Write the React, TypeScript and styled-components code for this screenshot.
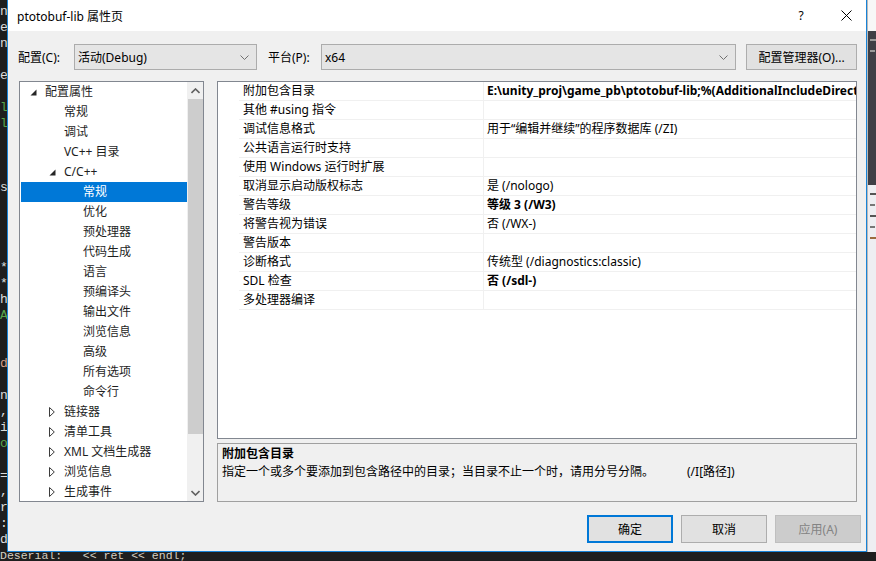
import React from "react";
import styled, { createGlobalStyle } from "styled-components";

const UI_FONT = `"Noto Sans", "Noto Sans CJK SC", sans-serif`;
const MONO = `"Liberation Mono", "DejaVu Sans Mono", monospace`;

const GlobalStyle = createGlobalStyle`
  html, body { margin: 0; padding: 0; background: #1e1e1e; overflow: hidden; }
  body { font-family: ${UI_FONT}; font-size: 12px; }
  * { box-sizing: border-box; }
`;

const Desktop = styled.div`
  width: 876px;
  height: 561px;
  display: flex;
  flex-direction: column;
  overflow: hidden;
`;

const TopRow = styled.div`
  height: 552px;
  display: flex;
`;

const CodeStrip = styled.div`
  width: 7px;
  flex: none;
  background: #1e1e1e;
  overflow: hidden;
  padding-top: 4px;
  font-family: ${MONO};
  font-size: 13px;
  line-height: 16px;
`;

const CodeLine = styled.div<{ $color: string }>`
  height: 16px;
  color: ${(p) => p.$color};
  white-space: pre;
`;

const RightStrip = styled.div`
  flex: 1;
  display: flex;
  flex-direction: column;
  border-left: 1px solid #b9b9b9;
`;

const StripPart = styled.div<{ $h?: number; $bg: string }>`
  height: ${(p) => (p.$h ? `${p.$h}px` : "auto")};
  flex: ${(p) => (p.$h ? "none" : "1")};
  background: ${(p) => p.$bg};
  display: flex;
  flex-direction: column;
  gap: 9px;
  padding: 8px 0 0 2px;
`;

const StripMark = styled.div<{ $w: number; $c: string }>`
  width: ${(p) => p.$w}px;
  height: 2px;
  background: ${(p) => p.$c};
`;

const BottomRow = styled.div`
  flex: 1;
  background: #1e1e1e;
  overflow: hidden;
  font-family: ${MONO};
  font-size: 11.5px;
  line-height: 16px;
  color: #d4cfc3;
  white-space: pre;
`;

const BottomCode = styled.div`
  margin-top: -4px;
`;

const Dialog = styled.div`
  width: 860px;
  flex: none;
  display: flex;
  flex-direction: column;
  background: #f0f0f0;
  border: 1px solid #1883d7;
  border-top: none;
`;

const TitleBar = styled.div`
  height: 31px;
  flex: none;
  background: #ffffff;
  display: flex;
  align-items: center;
  padding-left: 9px;
`;

const TitleText = styled.div`
  flex: 1;
  color: #000;
  font-size: 12px;
`;

const TitleButtons = styled.div`
  display: flex;
  gap: 5px;
`;

const TitleButton = styled.div`
  width: 40px;
  height: 31px;
  display: flex;
  align-items: center;
  justify-content: center;
  color: #000;
  font-size: 12px;
`;

const Body = styled.div`
  flex: 1;
  min-width: 0;
  display: flex;
  flex-direction: column;
  padding: 13px 9px 8px 10px;
`;

const Toolbar = styled.div`
  height: 26px;
  display: flex;
  align-items: center;
`;

const FieldLabel = styled.div<{ $w: number; $ml?: number }>`
  width: ${(p) => p.$w}px;
  margin-left: ${(p) => p.$ml ?? 0}px;
  flex: none;
  color: #000;
  white-space: nowrap;
`;

const Select = styled.div<{ $w: number }>`
  width: ${(p) => p.$w}px;
  height: 26px;
  flex: none;
  display: flex;
  align-items: center;
  justify-content: space-between;
  padding: 0 7px 0 3px;
  background: #e5e5e5;
  border: 1px solid #acacac;
  color: #000;
`;

const PushButton = styled.div<{ $w: number; $kind?: "primary" | "default" | "disabled"; $ml?: number }>`
  width: ${(p) => p.$w}px;
  height: ${(p) => (p.$kind ? 28 : 26)}px;
  margin-left: ${(p) => p.$ml ?? 0}px;
  flex: none;
  display: flex;
  align-items: center;
  justify-content: center;
  white-space: nowrap;
  background: ${(p) => (p.$kind === "disabled" ? "#cccccc" : "#e1e1e1")};
  border: ${(p) =>
    p.$kind === "primary"
      ? "2px solid #0078d7"
      : p.$kind === "disabled"
      ? "1px solid #bfbfbf"
      : "1px solid #adadad"};
  color: ${(p) => (p.$kind === "disabled" ? "#838383" : "#000")};
`;

const Main = styled.div`
  margin-top: 11px;
  height: 421px;
  display: flex;
  gap: 13px;
  min-width: 0;
`;

const Tree = styled.div`
  width: 185px;
  margin-left: 1px;
  flex: none;
  display: flex;
  background: #ffffff;
  border: 1px solid #828790;
  overflow: hidden;
`;

const TreeList = styled.div`
  flex: 1;
  padding-left: 1px;
  overflow: hidden;
`;

const TreeRow = styled.div<{ $depth: number; $selected?: boolean }>`
  height: 20px;
  line-height: 20px;
  display: flex;
  align-items: center;
  padding-left: ${(p) => 8 + p.$depth * 19}px;
  background: ${(p) => (p.$selected ? "#0078d7" : "transparent")};
  color: ${(p) => (p.$selected ? "#ffffff" : "#1e1e1e")};
  white-space: nowrap;
`;

const Expander = styled.span`
  width: 16px;
  height: 20px;
  flex: none;
  display: flex;
  align-items: center;
  padding-left: 1px;
`;

const ScrollBar = styled.div`
  width: 16px;
  flex: none;
  display: flex;
  flex-direction: column;
  background: #f0f0f0;
`;

const ScrollArrow = styled.div`
  height: 17px;
  flex: none;
  display: flex;
  align-items: center;
  justify-content: center;
`;

const ScrollThumb = styled.div`
  height: 335px;
  flex: none;
  margin: 0 0 0 1px;
  background: #cdcdcd;
`;

const ScrollSpacer = styled.div`
  flex: 1;
`;

const RightColumn = styled.div`
  flex: 1;
  min-width: 0;
  display: flex;
  flex-direction: column;
  gap: 4px;
`;

const Grid = styled.div`
  height: 358px;
  flex: none;
  min-width: 0;
  background: #ffffff;
  border: 1px solid #828790;
  overflow: hidden;
`;

const GridRow = styled.div`
  height: 19px;
  display: flex;
  min-width: 0;
`;

const Gutter = styled.div`
  width: 21px;
  flex: none;
`;

const NameCell = styled.div`
  width: 245px;
  flex: none;
  padding-left: 4px;
  line-height: 18px;
  color: #000;
  white-space: nowrap;
  border-bottom: 1px solid #f0f0f0;
  border-right: 1px solid #f0f0f0;
`;

const ValueCell = styled.div<{ $bold?: boolean }>`
  flex: 1;
  min-width: 0;
  padding-left: 3px;
  line-height: 18px;
  color: #000;
  font-weight: ${(p) => (p.$bold ? 700 : 400)};
  white-space: nowrap;
  overflow: hidden;
  border-bottom: 1px solid #f0f0f0;
`;

const Description = styled.div`
  flex: 1;
  background: #f0f0f0;
  border: 1px solid #a0a0a0;
  padding: 1px 4px 0;
  line-height: 18px;
  color: #000;
`;

const DescTitle = styled.div`
  font-weight: 700;
`;

const DescText = styled.div`
  display: flex;
  white-space: nowrap;
`;

const DescSwitch = styled.span`
  margin-left: 33px;
`;

const ButtonRow = styled.div`
  margin-top: 13px;
  margin-right: -4px;
  height: 28px;
  display: flex;
  justify-content: flex-end;
  gap: 8px;
`;

const Chevron = ({ up }: { up?: boolean }) => (
  <svg width="9" height="6" viewBox="0 0 9 6">
    <polyline
      points={up ? "0.5,5 4.5,1 8.5,5" : "0.5,1 4.5,5 8.5,1"}
      fill="none"
      stroke="#606060"
      strokeWidth="1.6"
    />
  </svg>
);

const SelectChevron = () => (
  <svg width="9" height="5" viewBox="0 0 9 5">
    <polyline points="0.5,0.5 4.5,4.5 8.5,0.5" fill="none" stroke="#707070" strokeWidth="1" />
  </svg>
);

const OpenTriangle = () => (
  <svg width="7" height="7" viewBox="0 0 7 7">
    <polygon points="6.5,0.5 6.5,6.5 0.5,6.5" fill="#262626" />
  </svg>
);

const ClosedTriangle = () => (
  <svg width="6" height="10" viewBox="0 0 6 10">
    <polygon points="0.5,0.5 5.3,5 0.5,9.5" fill="none" stroke="#3a3a3a" strokeWidth="1" />
  </svg>
);

const CloseIcon = () => (
  <svg width="11" height="11" viewBox="0 0 11 11">
    <line x1="0.5" y1="0.5" x2="10.5" y2="10.5" stroke="#000" strokeWidth="1" />
    <line x1="10.5" y1="0.5" x2="0.5" y2="10.5" stroke="#000" strokeWidth="1" />
  </svg>
);

type TreeItem = { label: string; depth: number; exp?: "open" | "closed"; selected?: boolean };

const treeItems: TreeItem[] = [
  { label: "配置属性", depth: 0, exp: "open" },
  { label: "常规", depth: 1 },
  { label: "调试", depth: 1 },
  { label: "VC++ 目录", depth: 1 },
  { label: "C/C++", depth: 1, exp: "open" },
  { label: "常规", depth: 2, selected: true },
  { label: "优化", depth: 2 },
  { label: "预处理器", depth: 2 },
  { label: "代码生成", depth: 2 },
  { label: "语言", depth: 2 },
  { label: "预编译头", depth: 2 },
  { label: "输出文件", depth: 2 },
  { label: "浏览信息", depth: 2 },
  { label: "高级", depth: 2 },
  { label: "所有选项", depth: 2 },
  { label: "命令行", depth: 2 },
  { label: "链接器", depth: 1, exp: "closed" },
  { label: "清单工具", depth: 1, exp: "closed" },
  { label: "XML 文档生成器", depth: 1, exp: "closed" },
  { label: "浏览信息", depth: 1, exp: "closed" },
  { label: "生成事件", depth: 1, exp: "closed" },
];

const gridRows: { name: string; value: string; bold?: boolean }[] = [
  { name: "附加包含目录", value: "E:\\unity_proj\\game_pb\\ptotobuf-lib;%(AdditionalIncludeDirectories)", bold: true },
  { name: "其他 #using 指令", value: "" },
  { name: "调试信息格式", value: "用于“编辑并继续”的程序数据库 (/ZI)" },
  { name: "公共语言运行时支持", value: "" },
  { name: "使用 Windows 运行时扩展", value: "" },
  { name: "取消显示启动版权标志", value: "是 (/nologo)" },
  { name: "警告等级", value: "等级 3 (/W3)", bold: true },
  { name: "将警告视为错误", value: "否 (/WX-)" },
  { name: "警告版本", value: "" },
  { name: "诊断格式", value: "传统型 (/diagnostics:classic)" },
  { name: "SDL 检查", value: "否 (/sdl-)", bold: true },
  { name: "多处理器编译", value: "" },
];

const W = "#dcdcdc";
const G = "#57a64a";
const B = "#d69d85";
const codeChars: Record<number, [string, string]> = {
  0: ["n", W], 1: ["e", W], 2: ["n", W], 4: ["e", W], 6: ["l", G], 7: ["l", G],
  11: ["s", W], 16: ["*", W], 17: ["*", W], 18: ["h", W], 19: ["A", G], 22: ["d", B],
  24: ["n", W], 25: [",", W], 26: ["i", W], 27: ["o", G], 29: ["=", W], 30: [",", W],
  31: ["r", W], 32: [":", W], 33: ["d", W],
};

export default function App() {
  const lines = Array.from({ length: 34 }, (_, i) => codeChars[i] ?? [" ", W]);
  return (
    <>
      <GlobalStyle />
      <Desktop>
        <TopRow>
          <CodeStrip>
            {lines.map(([ch, c], i) => (
              <CodeLine key={i} $color={c}>{ch}</CodeLine>
            ))}
          </CodeStrip>
          <Dialog>
            <TitleBar>
              <TitleText>ptotobuf-lib 属性页</TitleText>
              <TitleButtons>
                <TitleButton>?</TitleButton>
                <TitleButton><CloseIcon /></TitleButton>
              </TitleButtons>
            </TitleBar>
            <Body>
              <Toolbar>
                <FieldLabel $w={56}>配置(C):</FieldLabel>
                <Select $w={183}>
                  <span>活动(Debug)</span>
                  <SelectChevron />
                </Select>
                <FieldLabel $w={53} $ml={11}>平台(P):</FieldLabel>
                <Select $w={415}>
                  <span>x64</span>
                  <SelectChevron />
                </Select>
                <PushButton $w={111} $ml={10}>配置管理器(O)...</PushButton>
              </Toolbar>
              <Main>
                <Tree>
                  <TreeList>
                    {treeItems.map((t, i) => (
                      <TreeRow key={i} $depth={t.depth} $selected={t.selected}>
                        <Expander>
                          {t.exp === "open" && <OpenTriangle />}
                          {t.exp === "closed" && <ClosedTriangle />}
                        </Expander>
                        {t.label}
                      </TreeRow>
                    ))}
                  </TreeList>
                  <ScrollBar>
                    <ScrollArrow><Chevron up /></ScrollArrow>
                    <ScrollThumb />
                    <ScrollSpacer />
                    <ScrollArrow><Chevron /></ScrollArrow>
                  </ScrollBar>
                </Tree>
                <RightColumn>
                  <Grid>
                    {gridRows.map((r, i) => (
                      <GridRow key={i}>
                        <Gutter />
                        <NameCell>{r.name}</NameCell>
                        <ValueCell $bold={r.bold}>{r.value}</ValueCell>
                      </GridRow>
                    ))}
                  </Grid>
                  <Description>
                    <DescTitle>附加包含目录</DescTitle>
                    <DescText>
                      <span>指定一个或多个要添加到包含路径中的目录；当目录不止一个时，请用分号分隔。</span>
                      <DescSwitch>(/I[路径])</DescSwitch>
                    </DescText>
                  </Description>
                </RightColumn>
              </Main>
              <ButtonRow>
                <PushButton $w={86} $kind="primary">确定</PushButton>
                <PushButton $w={86} $kind="default">取消</PushButton>
                <PushButton $w={86} $kind="disabled">应用(A)</PushButton>
              </ButtonRow>
            </Body>
          </Dialog>
          <RightStrip>
            <StripPart $h={31} $bg="#f7f7f7" />
            <StripPart $h={154} $bg="#3f3f46">
              <StripMark $w={6} $c="#9a9a9a" />
              <StripMark $w={5} $c="#9a9a9a" />
            </StripPart>
            <StripPart $bg="#eeeef2">
              <StripMark $w={6} $c="#555" />
              <StripMark $w={5} $c="#777" />
              <StripMark $w={6} $c="#555" />
              <StripMark $w={5} $c="#777" />
              <StripMark $w={6} $c="#9b6b3f" />
            </StripPart>
          </RightStrip>
        </TopRow>
        <BottomRow>
          <BottomCode>Deserial:   {"<<"} ret {"<<"} endl;</BottomCode>
        </BottomRow>
      </Desktop>
    </>
  );
}
